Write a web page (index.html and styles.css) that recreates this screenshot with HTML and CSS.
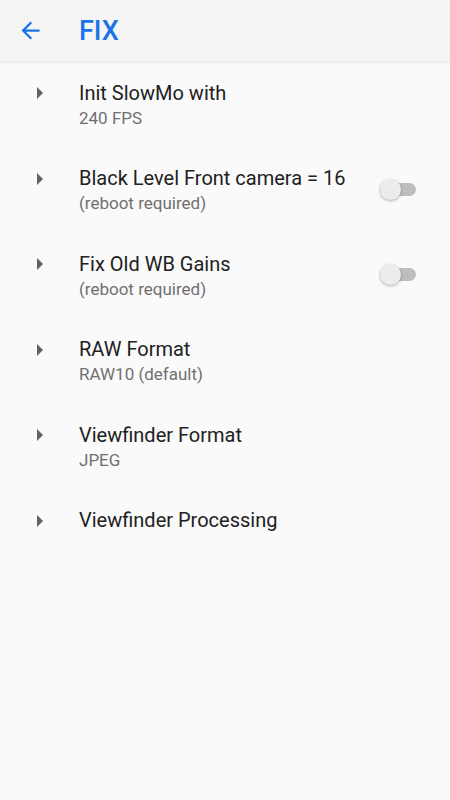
FILE: index.html
```html
<!DOCTYPE html>
<html>
<head>
    <title>FIX</title>
    <link rel="stylesheet" href="styles.css">
</head>
<body>
    <div class="app-bar">
        <svg class="back" viewBox="0 0 24 24"><path d="M20 11H7.83l5.59-5.59L12 4l-8 8 8 8 1.41-1.41L7.83 13H20v-2z"/></svg>
        <h1>FIX</h1>
    </div>

    <div class="pref-list">
        <div class="pref">
            <span class="arrow"></span>
            <div class="pref-text">
                <div class="pref-title">Init SlowMo with</div>
                <div class="pref-summary">240 FPS</div>
            </div>
        </div>

        <div class="pref">
            <span class="arrow"></span>
            <div class="pref-text">
                <div class="pref-title">Black Level Front camera = 16</div>
                <div class="pref-summary">(reboot required)</div>
            </div>
            <span class="switch"></span>
        </div>

        <div class="pref">
            <span class="arrow"></span>
            <div class="pref-text">
                <div class="pref-title">Fix Old WB Gains</div>
                <div class="pref-summary">(reboot required)</div>
            </div>
            <span class="switch"></span>
        </div>

        <div class="pref">
            <span class="arrow"></span>
            <div class="pref-text">
                <div class="pref-title">RAW Format</div>
                <div class="pref-summary">RAW10 (default)</div>
            </div>
        </div>

        <div class="pref">
            <span class="arrow"></span>
            <div class="pref-text">
                <div class="pref-title">Viewfinder Format</div>
                <div class="pref-summary">JPEG</div>
            </div>
        </div>

        <div class="pref">
            <span class="arrow"></span>
            <div class="pref-text">
                <div class="pref-title">Viewfinder Processing</div>
            </div>
        </div>
    </div>
</body>
</html>
```

FILE: styles.css
```css
body {
    font-family: Roboto, 'Noto Sans', sans-serif;
    background-color: #fafafa;
    margin: 0;
    padding: 0;
    height: 800px;
    overflow: hidden;
}

.app-bar {
    display: flex;
    align-items: center;
    height: 61px;
    background-color: #f5f5f5;
    box-shadow: 0 1px 3px rgba(0, 0, 0, 0.12);
    position: relative;
}

.back {
    width: 27px;
    height: 27px;
    fill: #1a73e8;
    margin-left: 17px;
}

h1 {
    margin: 0 0 0 35px;
    font-size: 27px;
    font-weight: 500;
    color: #1a73e8;
}

.pref {
    display: flex;
    align-items: flex-start;
    padding: 19.5px 0 17px;
}

.arrow {
    width: 0;
    height: 0;
    border-top: 6px solid transparent;
    border-bottom: 6px solid transparent;
    border-left: 6px solid #616161;
    margin: 6.5px 36px 0 37px;
}

.pref-text {
    flex: 1;
}

.pref-title {
    font-size: 20px;
    line-height: 25px;
    color: #212121;
}

.pref-summary {
    font-size: 17px;
    line-height: 24px;
    color: #707070;
}

.switch {
    position: relative;
    width: 36px;
    height: 13px;
    border-radius: 7px;
    background-color: #bdbdbd;
    margin: 16.5px 34px 0 0;
}

.switch::before {
    content: "";
    position: absolute;
    left: 0;
    top: -4px;
    width: 21px;
    height: 21px;
    border-radius: 50%;
    background-color: #ececec;
    box-shadow: 0 1px 3px rgba(0, 0, 0, 0.3);
}
```
